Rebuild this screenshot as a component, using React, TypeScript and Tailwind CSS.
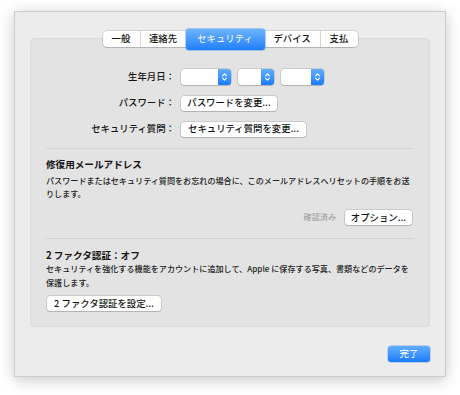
import React from "react";

const font = "font-['Noto_Sans_CJK_JP','Noto_Sans',sans-serif]";

function Chevrons() {
  return (
    <svg width="7" height="10" viewBox="0 0 7 10" fill="none">
      <path d="M1.6 3.8 L3.5 1.8 L5.4 3.8 M1.6 6.2 L3.5 8.2 L5.4 6.2" stroke="white" strokeWidth="1.1" strokeLinecap="round" strokeLinejoin="round" />
    </svg>
  );
}

function Popup({ w }: { w: string }) {
  return (
    <div className={`${w} h-[16px] flex bg-white rounded-[3px] shadow-[0_0_0_0.5px_rgba(0,0,0,0.22),0_1px_1px_rgba(0,0,0,0.12)]`}>
      <div className="flex-1" />
      <div className="w-[13px] h-full rounded-r-[3px] bg-gradient-to-b from-[#62aefe] to-[#167bff] flex items-center justify-center">
        <Chevrons />
      </div>
    </div>
  );
}

function Btn({ w, children }: { w: string; children: React.ReactNode }) {
  return (
    <div className={`${w} h-[15px] bg-white rounded-[3px] shadow-[0_0_0_0.5px_rgba(0,0,0,0.22),0_1px_1px_rgba(0,0,0,0.12)] flex items-center justify-center text-[9.4px] font-medium leading-none text-[#141414] whitespace-nowrap`}>
      {children}
    </div>
  );
}

const tabs = [
  { t: "一般", w: "w-[38px]" },
  { t: "連絡先", w: "w-[45px]" },
  { t: "セキュリティ", w: "w-[79px]", sel: true },
  { t: "デバイス", w: "w-[56px]" },
  { t: "支払", w: "w-[37px]" },
];

export default function App() {
  return (
    <div className={`w-[460px] h-[395px] bg-white overflow-hidden pt-[11px] pl-[14px] ${font}`}>
      <div className="w-[432px] h-[366px] bg-[#ececec] border border-[#cdcdcd] shadow-[0_3px_14px_rgba(0,0,0,0.22)] flex flex-col">
        {/* tabs */}
        <div className="pt-[19px] flex justify-center relative z-10">
          <div className="h-[16px] flex items-center rounded-[4px] bg-white shadow-[0_0_0_0.5px_rgba(0,0,0,0.22),0_1px_1px_rgba(0,0,0,0.12)]">
            {tabs.map((tab, i) =>
              tab.sel ? (
                <div
                  key={i}
                  className={`${tab.w} h-[21px] rounded-[3px] bg-gradient-to-b from-[#6cb3fb] to-[#1b7ef9] shadow-[0_0_0_1px_rgba(70,150,240,0.45)] flex items-center justify-center text-white text-[9.4px] leading-none`}
                >
                  {tab.t}
                </div>
              ) : (
                <div
                  key={i}
                  className={`${tab.w} h-full flex items-center justify-center text-[9.4px] font-medium leading-none text-[#141414] ${i < tabs.length - 1 && !tabs[i + 1].sel ? "border-r border-[#d4d4d4]" : ""}`}
                >
                  {tab.t}
                </div>
              )
            )}
          </div>
        </div>

        {/* panel */}
        <div className="mx-[15px] -mt-[9px] w-[400px] h-[289px] bg-[#e3e3e3] rounded-[4px] border border-[#dbdbdb] pt-[30px] flex flex-col">
          <div className="flex flex-col gap-[10px]">
            <div className="flex items-center h-[16px]">
              <div className="w-[144px] text-right text-[9.4px] font-medium leading-none text-[#141414]">生年月日：</div>
              <div className="ml-[6px] flex gap-[7px]">
                <Popup w="w-[50px]" />
                <Popup w="w-[36px]" />
                <Popup w="w-[43px]" />
              </div>
            </div>
            <div className="flex items-center h-[16px]">
              <div className="w-[144px] text-right text-[9.4px] font-medium leading-none text-[#141414]">パスワード：</div>
              <div className="ml-[6px]">
                <Btn w="w-[96px]">パスワードを変更...</Btn>
              </div>
            </div>
            <div className="flex items-center h-[16px]">
              <div className="w-[144px] text-right text-[9.4px] font-medium leading-none text-[#141414]">セキュリティ質問：</div>
              <div className="ml-[6px]">
                <Btn w="w-[125px]">セキュリティ質問を変更...</Btn>
              </div>
            </div>
          </div>

          <div className="mx-[15px] mt-[11px] h-px bg-[#d3d3d3]" />

          <div className="px-[15px]">
            <div className="mt-[8px] text-[9.6px] leading-[14px] font-semibold text-[#141414]">修復用メールアドレス</div>
            <div className="mt-[3px] text-[8.1px] leading-[13px] font-medium text-[#222]">
              <div className="whitespace-nowrap">パスワードまたはセキュリティ質問をお忘れの場合に、このメールアドレスへリセットの手順をお送</div>
              <div className="whitespace-nowrap">りします。</div>
            </div>
            <div className="mt-[10px] flex items-center justify-end pr-[2px]">
              <div className="text-[8.1px] leading-none text-[#999] mr-[9px]">確認済み</div>
              <Btn w="w-[67px]">オプション...</Btn>
            </div>
          </div>

          <div className="mx-[15px] mt-[13px] h-px bg-[#d3d3d3]" />

          <div className="px-[15px]">
            <div className="mt-[9px] text-[9.6px] leading-[14px] font-semibold text-[#141414]">2 ファクタ認証：オフ</div>
            <div className="mt-0 text-[8.1px] leading-[14px] font-medium text-[#222]">
              <div className="whitespace-nowrap">セキュリティを強化する機能をアカウントに追加して、Apple に保存する写真、書類などのデータを</div>
              <div className="whitespace-nowrap">保護します。</div>
            </div>
            <div className="mt-[6px] pl-[1px]">
              <Btn w="w-[114px]">2 ファクタ認証を設定...</Btn>
            </div>
          </div>
        </div>

        <div className="mt-[19px] pr-[15px] flex justify-end">
          <div className="w-[42px] h-[16px] rounded-[3px] bg-gradient-to-b from-[#62aefe] to-[#167bff] shadow-[0_0_0_0.5px_rgba(0,90,220,0.4)] flex items-center justify-center text-white text-[9.4px] leading-none">
            完了
          </div>
        </div>
      </div>
    </div>
  );
}
